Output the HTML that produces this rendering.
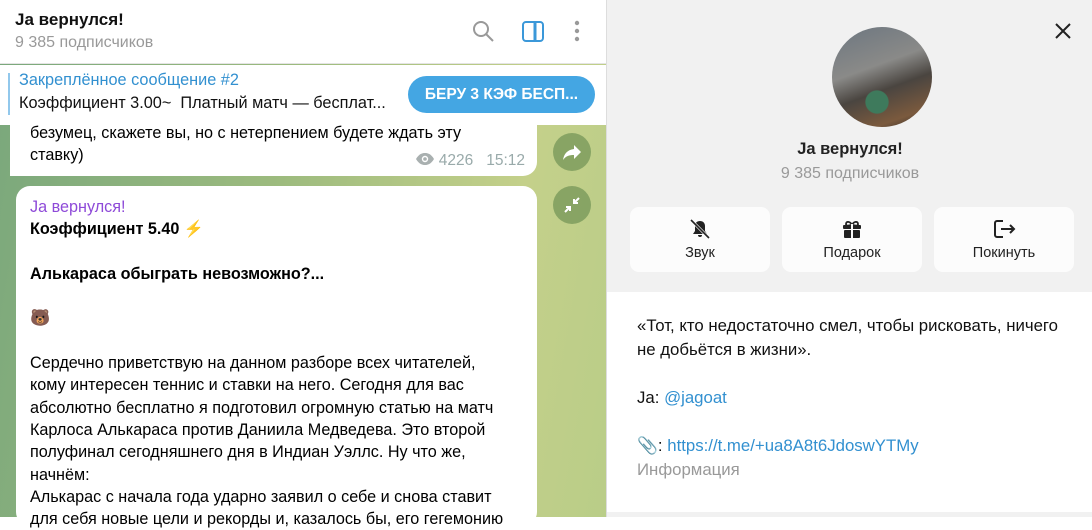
<!DOCTYPE html>
<html><head><meta charset="utf-8"><style>
*{margin:0;padding:0;box-sizing:border-box}
body{width:1092px;height:517px;overflow:hidden;font-family:"Liberation Sans",sans-serif;position:relative;background:#fff}
.left{position:absolute;left:0;top:0;width:606px;height:517px;background:linear-gradient(100deg,#79a77c 0%,#9dbb7e 45%,#c4d08a 80%,#b9cd88 100%)}
.hdr{position:absolute;left:0;top:0;width:606px;height:64px;background:#fff;border-bottom:1px solid #e4e4e4}
.pin{position:absolute;left:0;top:65px;width:606px;height:60px;background:#fff}
.right{position:absolute;left:606px;top:0;width:486px;height:517px;background:#f1f1f1;border-left:1px solid #ddd}
.bub{position:absolute;background:#fff;border-radius:14px;color:#000;font-size:16.2px;line-height:22.3px}
.btn{position:absolute;top:207px;width:140px;height:65px;background:#fcfcfc;border-radius:9px;text-align:center;font-size:14.5px;color:#222}
.btn svg{display:block;margin:11px auto 5px}
.circ{position:absolute;left:553px;width:38px;height:38px;border-radius:50%;background:rgba(90,130,70,.55)}
</style></head><body>
<div class="left">
 <div class="bub" style="left:10px;top:110px;width:527px;height:66px;border-bottom-left-radius:0;padding:12px 0 0 20px">безумец, скажете вы, но с нетерпением будете ждать эту<br>ставку)
  <div style="position:absolute;right:12px;top:40px;color:#9aa;font-size:15.5px"><svg width="20" height="14" viewBox="0 0 20 14" style="vertical-align:-1px;margin-right:4px"><path d="M1 7c3-5 6-6 9-6s6 1 9 6c-3 5-6 6-9 6S4 12 1 7z" fill="#a9b0b0"/><circle cx="10" cy="7" r="3.2" fill="#fff"/><circle cx="10" cy="7" r="1.8" fill="#a9b0b0"/></svg>4226&nbsp;&nbsp;&nbsp;15:12</div>
 </div>
 <div class="bub" style="left:16px;top:186px;width:521px;height:340px;padding:10px 0 0 14px">
  <div style="color:#8e4ad8">Ja вернулся!</div>
  <div style="font-weight:bold">Коэффициент 5.40 <span style="color:#f5b92a">⚡</span></div>
  <div>&nbsp;</div>
  <div style="font-weight:bold">Алькараса обыграть невозможно?...</div>
  <div>&nbsp;</div>
  <div>🐻</div>
  <div>&nbsp;</div>
  <div>Сердечно приветствую на данном разборе всех читателей,<br>кому интересен теннис и ставки на него. Сегодня для вас<br>абсолютно бесплатно я подготовил огромную статью на матч<br>Карлоса Алькараса против Даниила Медведева. Это второй<br>полуфинал сегодняшнего дня в Индиан Уэллс. Ну что же,<br>начнём:<br>Алькарас с начала года ударно заявил о себе и снова ставит<br>для себя новые цели и рекорды и, казалось бы, его гегемонию</div>
 </div>
 <div class="circ" style="top:133px"><svg width="38" height="38" viewBox="0 0 38 38"><path d="M21 12l7 7-7 7v-4c-5 0-8 1-11 5 1-6 4-10 11-11z" fill="#fff"/></svg></div>
 <div class="circ" style="top:186px"><svg width="38" height="38" viewBox="0 0 38 38" fill="none" stroke="#fff" stroke-width="2"><path d="M26 12l-5 5M21 13v4h4M12 26l5-5M17 25v-4h-4"/></svg></div>
</div>
<div class="hdr">
 <div style="position:absolute;left:15px;top:10px;font-size:17px;font-weight:bold;color:#111">Ja вернулся!</div>
 <div style="position:absolute;left:15px;top:34px;font-size:16px;color:#999">9 385 подписчиков</div>
 <svg style="position:absolute;left:472px;top:20px" width="24" height="24" fill="none" stroke="#999" stroke-width="2"><circle cx="9" cy="9" r="7"/><path d="M14 14l7 7"/></svg>
 <svg style="position:absolute;left:521px;top:20px" width="24" height="24" fill="none" stroke="#3b98d9" stroke-width="2"><rect x="2" y="2" width="20" height="19" rx="3"/><path d="M14 2v19" stroke-width="3"/></svg>
 <svg style="position:absolute;left:572px;top:20px" width="10" height="22" fill="#999"><circle cx="5" cy="3" r="2.2"/><circle cx="5" cy="11" r="2.2"/><circle cx="5" cy="19" r="2.2"/></svg>
</div>
<div class="pin">
 <div style="position:absolute;left:8px;top:8px;width:2px;height:42px;background:#4aa3df;opacity:.6"></div>
 <div style="position:absolute;left:19px;top:6px;font-size:16.3px;color:#3290d0">Закреплённое сообщение #2</div>
 <div style="position:absolute;left:19px;top:29px;font-size:16.3px;color:#111">Коэффициент 3.00~&nbsp; Платный матч — бесплат...</div>
 <div style="position:absolute;left:408px;top:11px;width:187px;height:37px;border-radius:19px;background:#44a6e3;color:#fff;font-size:15.5px;font-weight:bold;text-align:center;line-height:37px">БЕРУ 3 КЭФ БЕСП...</div>
</div>
<div class="right">
 <svg style="position:absolute;left:447px;top:22px" width="18" height="18" stroke="#222" stroke-width="2"><path d="M2 2l14 14M16 2L2 16"/></svg>
 <div style="position:absolute;left:225px;top:27px;width:100px;height:100px;border-radius:50%;background:radial-gradient(circle at 45% 75%,#3e7a5c 0 12%,transparent 13%),linear-gradient(160deg,#6c7680 0%,#8a8a88 40%,#4a4540 60%,#7b5a3e 85%,#2d2a28 100%)"></div>
 <div style="position:absolute;left:0;width:486px;top:140px;text-align:center;font-size:16.5px;font-weight:bold;color:#222">Ja вернулся!</div>
 <div style="position:absolute;left:0;width:486px;top:165px;text-align:center;font-size:16px;color:#999">9 385 подписчиков</div>
 <div class="btn" style="left:23px"><svg width="22" height="22" viewBox="0 0 22 22"><path d="M11 3c-3 0-5 2-5 5v5l-2 3h14l-2-3V8c0-3-2-5-5-5zM9 17a2 2 0 004 0z" fill="#222"/><path d="M2 2l18 18" stroke="#fcfcfc" stroke-width="3"/><path d="M2 2l18 18" stroke="#222" stroke-width="1.6"/></svg>Звук</div>
 <div class="btn" style="left:175px"><svg width="22" height="22" viewBox="0 0 22 22" fill="#222"><rect x="2" y="7" width="18" height="4" rx="1"/><rect x="3" y="12" width="16" height="8" rx="1"/><path d="M11 7c-2-4-6-4-6-1s4 1 6 1c2 0 6 2 6-1s-4-3-6 1z" fill="none" stroke="#222" stroke-width="1.8"/><rect x="10" y="6" width="2" height="15" fill="#fcfcfc"/></svg>Подарок</div>
 <div class="btn" style="left:327px"><svg width="24" height="22" viewBox="0 0 24 22" fill="none" stroke="#222" stroke-width="2"><path d="M11 3H5a2 2 0 00-2 2v12a2 2 0 002 2h6M9 11h13M18 7l4 4-4 4"/></svg>Покинуть</div>
 <div style="position:absolute;left:0;top:292px;width:486px;height:220px;background:#fff;padding:22px 0 0 30px;font-size:16.8px;line-height:24px;color:#111">«Тот, кто недостаточно смел, чтобы рисковать, ничего<br>не добьётся в жизни».<br><br>Ja: <span style="color:#3290d0">@jagoat</span><br><br>📎: <span style="color:#3290d0">https://t.me/+ua8A8t6JdoswYTMy</span><br><span style="color:#999">Информация</span></div>
</div>
</body></html>
